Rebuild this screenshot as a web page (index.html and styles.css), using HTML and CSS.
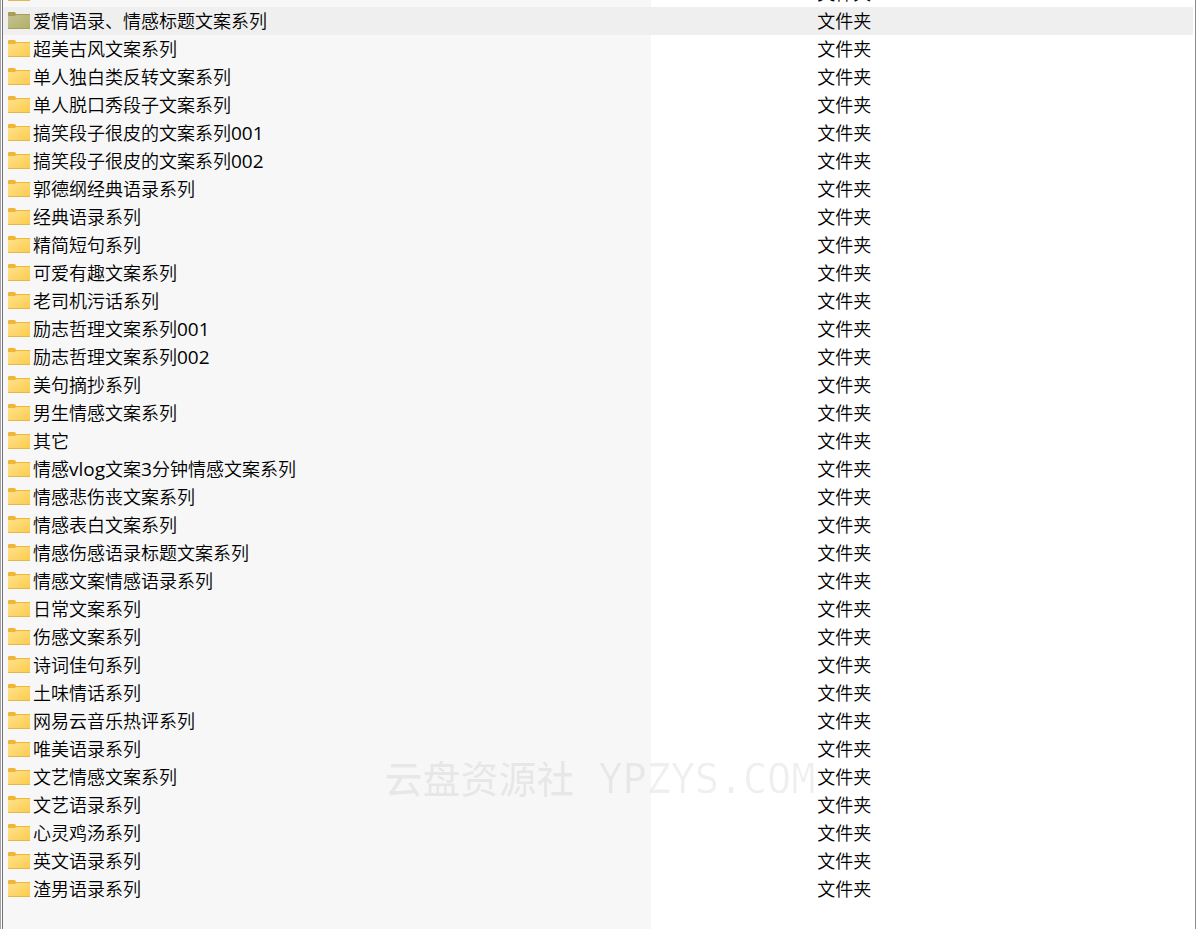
FILE: index.html
```
<!DOCTYPE html>
<html lang="zh-CN">
<head>
<meta charset="utf-8">
<title>文案系列</title>
<link rel="stylesheet" href="styles.css">
</head>
<body>
<svg class="defs" aria-hidden="true">
  <defs>
    <linearGradient id="gold" x1="0" y1="0" x2="1" y2="1"><stop offset="0" stop-color="#ffe28e"/><stop offset="1" stop-color="#fccb4a"/></linearGradient>
    <symbol id="folder" viewBox="0 0 22 18">
      <path class="tab" d="M0 5V1q0-1 1-1h6l1 2h14v3H0z"/>
      <path class="front" d="M0 4h7l1-1h14v14H0z"/>
      <path class="edge" d="M0 16h22v1H0z"/>
    </symbol>
  </defs>
</svg>
<main class="window">
  <table class="files" aria-label="文件列表">
    <colgroup><col class="col-name"><col class="col-date"><col class="col-type"></colgroup>
    <tbody id="rows"></tbody>
  </table>
  <div class="watermark"><span class="brand">云盘资源社</span> YPZYS.COM</div>
</main>
<script src="files.js"></script>
</body>
</html>
```
FILE: files.js
```
const names = [
  "", "爱情语录、情感标题文案系列", "超美古风文案系列", "单人独白类反转文案系列",
  "单人脱口秀段子文案系列", "搞笑段子很皮的文案系列001", "搞笑段子很皮的文案系列002",
  "郭德纲经典语录系列", "经典语录系列", "精简短句系列", "可爱有趣文案系列",
  "老司机污话系列", "励志哲理文案系列001", "励志哲理文案系列002", "美句摘抄系列",
  "男生情感文案系列", "其它", "情感vlog文案3分钟情感文案系列", "情感悲伤丧文案系列",
  "情感表白文案系列", "情感伤感语录标题文案系列", "情感文案情感语录系列", "日常文案系列",
  "伤感文案系列", "诗词佳句系列", "土味情话系列", "网易云音乐热评系列", "唯美语录系列",
  "文艺情感文案系列", "文艺语录系列", "心灵鸡汤系列", "英文语录系列", "渣男语录系列"
];
const selected = 1;
const markLatin = (s) => s.replace(/[a-z0-9]+/g, '<span class="latin">$&</span>');

document.getElementById("rows").innerHTML = names.map((name, i) => `
  <tr class="row${i === selected ? " selected" : ""}">
    <td class="name"><div class="entry"><svg class="icon" aria-hidden="true"><use href="#folder"/></svg><span>${markLatin(name)}</span></div></td>
    <td class="date"></td>
    <td class="type">文件夹</td>
  </tr>`).join("");
```
FILE: styles.css
```
* { box-sizing: border-box; }
body {
  margin: 0;
  border-left: 1px solid #a5a2a8;
  background: #fff;
  color: #000;
  font: 350 18px/28px "Open Sans", "Noto Sans CJK SC", sans-serif;
}
.latin { font: 400 19px/20px "Open Sans", sans-serif; }
.defs { position: absolute; width: 0; height: 0; }
.window {
  position: relative;
  min-height: 100vh;
  overflow: hidden;
  display: flex;
  flex-direction: column;
  margin-left: 1px;
  padding-right: 2px;
  border-left: 1px solid #77717a;
  border-right: 1px solid #8c8c8c;
  background: linear-gradient(to right, #f7f7f7 54.4%, #fff 54.4%);
}
.files {
  width: 100%;
  margin-top: -21px;
  border-collapse: collapse;
  table-layout: fixed;
  position: relative;
  z-index: 1;
}
.col-name { width: 54.4%; }
.col-date { width: 13.6%; }
td { height: 28px; padding: 0; white-space: nowrap; }
.selected { background: #efefef; }
.name { padding-left: 5px; }
.type { padding-left: 5px; }
.entry { display: flex; align-items: center; gap: 3px; height: 28px; }
.icon { width: 22px; height: 18px; flex: none; }
.tab { fill: #efb637; }
.front { fill: url(#gold); }
.edge { fill: #e3b94c; }
.selected .icon { filter: saturate(0.6) hue-rotate(14deg) brightness(0.84); }
.watermark {
  position: absolute;
  left: 32%;
  top: 749px;
  font: 200 40px/56px "DejaVu Sans Mono", monospace;
  color: rgba(0, 0, 0, 0.06);
  white-space: pre;
}
.brand { font: 500 38px/56px "Noto Sans CJK SC", sans-serif; }
```
